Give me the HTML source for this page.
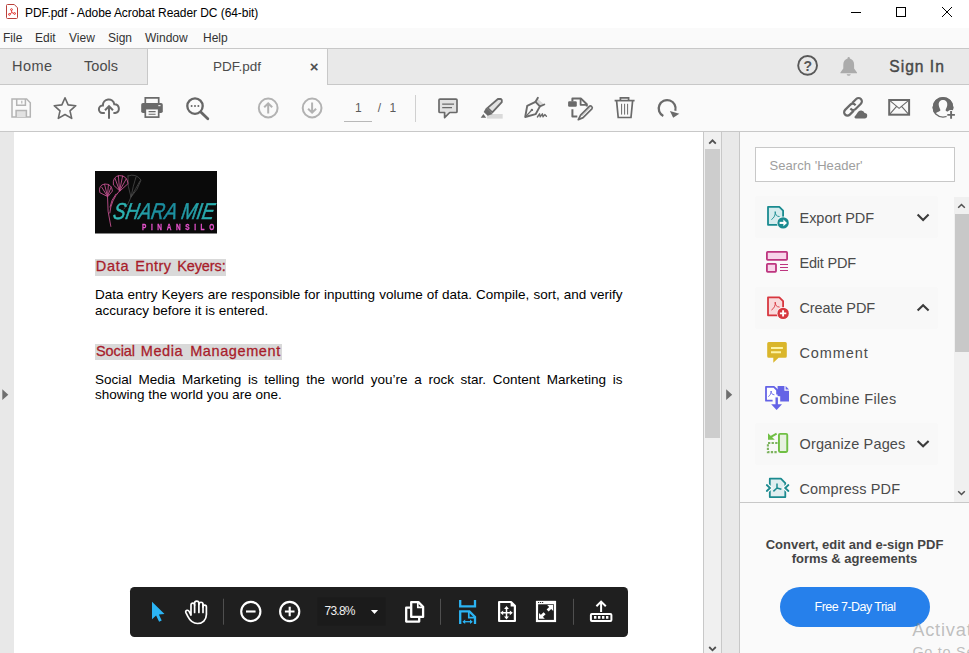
<!DOCTYPE html>
<html><head><meta charset="utf-8"><title>PDF.pdf - Adobe Acrobat Reader DC (64-bit)</title>
<style>
*{margin:0;padding:0;box-sizing:border-box}
html,body{width:969px;height:653px;overflow:hidden;background:#fff;font-family:"Liberation Sans",sans-serif;color:#333}
.a{position:absolute}
.t{position:absolute;white-space:nowrap;line-height:1}
svg{position:absolute;overflow:visible}
.p{left:95px;width:527.5px;font-size:13.5px;line-height:16px;color:#000;white-space:nowrap}
.j{text-align:justify;text-align-last:justify;white-space:normal}
.h{font-size:14.5px;color:#a81c2a;-webkit-text-stroke:0.28px #a81c2a}
.r{left:799.5px;font-size:14.5px;color:#4b4b4b;margin-top:0.5px}
</style></head><body>
<!-- title bar -->
<div class="a" id="titlebar" style="left:0;top:0;width:969px;height:28px;background:#fff"></div>
<div class="t" id="title" style="left:25px;top:7.2px;font-size:12px;color:#000;letter-spacing:-0.07px">PDF.pdf - Adobe Acrobat Reader DC (64-bit)</div>
<!-- menu bar -->
<div class="a" id="menubar" style="left:0;top:28px;width:969px;height:20px;background:#fafafa"></div>
<div class="t m" style="left:3px;top:32px;font-size:12px">File</div>
<div class="t m" style="left:35px;top:32px;font-size:12px">Edit</div>
<div class="t m" style="left:69px;top:32px;font-size:12px">View</div>
<div class="t m" style="left:108px;top:32px;font-size:12px">Sign</div>
<div class="t m" style="left:145px;top:32px;font-size:12px">Window</div>
<div class="t m" style="left:203px;top:32px;font-size:12px">Help</div>
<!-- tab bar -->
<div class="a" id="tabbar" style="left:0;top:48px;width:969px;height:37px;background:#e9e9e9;border-top:1px solid #c8c8c8;border-bottom:1px solid #c8c8c8"></div>
<div class="a" id="tab" style="left:147px;top:49px;width:181px;height:36px;background:#fafafa;border-left:1px solid #c8c8c8;border-right:1px solid #c8c8c8"></div>
<div class="t" style="left:12px;top:59.3px;font-size:14.5px;color:#4b4b4b;letter-spacing:0.5px">Home</div>
<div class="t" style="left:84px;top:59.3px;font-size:14.5px;color:#4b4b4b;letter-spacing:0.05px">Tools</div>
<div class="t" style="left:213px;top:60.2px;font-size:13.5px;color:#4b4b4b">PDF.pdf</div>
<div class="t" style="left:309.8px;top:58.5px;font-size:15px;color:#505050;font-weight:bold">×</div>
<div class="t" style="left:889.3px;top:58.6px;font-size:15.6px;color:#484848;letter-spacing:1px;-webkit-text-stroke:0.4px #484848">Sign In</div>
<!-- toolbar -->
<div class="a" id="toolbar" style="left:0;top:85px;width:969px;height:47px;background:#fafafa;border-bottom:1px solid #c8c8c8"></div>
<div class="t" style="left:355px;top:101.9px;font-size:12px;color:#5a5a5a">1</div>
<div class="t" style="left:377.8px;top:101.9px;font-size:12px;color:#5a5a5a;word-spacing:5px">/ 1</div>
<div class="a" style="left:344px;top:120.7px;width:28px;height:1px;background:#b8b8b8"></div>
<div class="a" style="left:415px;top:95px;width:1px;height:27px;background:#d0d0d0"></div>
<!-- doc area -->
<div class="a" id="gutterL" style="left:0;top:132px;width:14px;height:521px;background:#e8e8e8"></div>
<div class="a" id="page" style="left:14px;top:132px;width:689px;height:521px;background:#fff"></div>
<div class="a" id="sb" style="left:703px;top:132px;width:19px;height:521px;background:#f0f0f0;border-left:1px solid #c8c8c8;border-right:1px solid #c8c8c8"></div>
<div class="a" id="thumb" style="left:705px;top:149px;width:15px;height:289px;background:#cdcdcd"></div>
<div class="a" id="gutterR" style="left:722px;top:132px;width:17px;height:521px;background:#e9e9e9"></div>
<div class="a" id="panel" style="left:739px;top:132px;width:230px;height:521px;background:#fafafa;border-left:1px solid #c8c8c8"></div>


<!-- logo -->
<svg id="logo" width="122" height="62.5" viewBox="95 171 122 62.5" style="left:95px;top:171px;overflow:hidden">
<defs><linearGradient id="tg" x1="0" y1="0" x2="1" y2="0"><stop offset="0" stop-color="#30bcb6"/><stop offset="0.5" stop-color="#19889c"/><stop offset="1" stop-color="#2cb2b0"/></linearGradient><filter id="soft"><feGaussianBlur stdDeviation="0.45"/></filter></defs>
<rect x="95" y="171" width="122" height="62.5" fill="#0a0a0a"/>
<g filter="url(#soft)" fill="none" stroke-linecap="round">
<g stroke="#4a4a4a" stroke-width="0.8"><path d="M128,176 Q136,173 141,180 Q138,190 131,197 Q127,186 128,176 Z M131,197 Q133,186 136,177 M131,197 Q136,188 140,181 M131,197 Q129,204 124,209"/></g>
<g stroke="#c2508d" stroke-width="0.9"><path d="M107.5,196.5 L99.8,192.6 Q98.2,185 104.8,184 Q111.6,183.8 112.4,190.6 Z"/><path d="M107.5,196.5 L101.6,187 M107.5,196.5 L104.6,184.4 M107.5,196.5 L108.4,184.6 M107.5,196.5 L111.2,187"/><path d="M119.6,190.8 L113.4,185 Q112.4,176.4 119.4,175.6 Q127,175.4 128,183.2 Z"/><path d="M119.6,190.8 L115,178.4 M119.6,190.8 L118.4,175.8 M119.6,190.8 L122.6,176 M119.6,190.8 L126.2,179"/><path d="M107.5,196.5 Q107,211 110.8,226.4 M119.6,190.8 Q111,200 109.8,213 M110,207 Q111,200 116,194"/></g>
</g>
<g filter="url(#soft)"><text x="112.5" y="219.2" font-family="'Liberation Sans',sans-serif" font-style="italic" font-size="23" fill="url(#tg)" stroke="url(#tg)" stroke-width="0.5" textLength="101" lengthAdjust="spacingAndGlyphs" transform="skewX(-10) translate(38.5,0)">SHARA MIE</text>
<text x="182.05" y="230.1" font-family="'Liberation Sans',sans-serif" font-weight="bold" font-size="8.3" fill="#e652cc" stroke="#e652cc" stroke-width="0.3" textLength="92.6" lengthAdjust="spacing" transform="scale(0.78,1)">PINANSILO</text></g>
</svg>
<!-- document content -->
<div class="a" id="hl1" style="left:95px;top:259px;width:131px;height:16.5px;background:#d9d9d9"></div>
<div class="t h" id="h1" style="left:0;top:258.7px"><span class="a" style="left:95.8px;letter-spacing:0.7px">Data</span><span class="a" style="left:135.3px;letter-spacing:0.45px">Entry</span><span class="a" style="left:177.2px;letter-spacing:-0.1px">Keyers:</span></div>
<div class="a p j" style="top:287.2px">Data entry Keyers are responsible for inputting volume of data. Compile, sort, and verify</div>
<div class="a p" style="top:303px">accuracy before it is entered.</div>
<div class="a" id="hl2" style="left:95px;top:344px;width:187px;height:16px;background:#d9d9d9"></div>
<div class="t h" id="h2" style="left:0;top:343.7px"><span class="a" style="left:96px;letter-spacing:-0.1px">Social</span><span class="a" style="left:140.8px;letter-spacing:0.55px">Media</span><span class="a" style="left:190.2px;letter-spacing:0.6px">Management</span></div>
<div class="a p j" style="top:371.8px">Social Media Marketing is telling the world you’re a rock star. Content Marketing is</div>
<div class="a p" style="top:386.8px">showing the world you are one.</div>
<!-- right panel -->
<div class="a" style="left:755px;top:147px;width:200px;height:35px;background:#fff;border:1px solid #c8c8c8"></div>
<div class="t" style="left:769.5px;top:159.2px;font-size:13px;color:#9e9e9e;letter-spacing:0.05px">Search 'Header'</div>
<div class="a" style="left:755px;top:196px;width:183px;height:42px;border-radius:3px;background:#f8f8f8"></div><div class="a" style="left:755px;top:286.5px;width:183px;height:42px;border-radius:3px;background:#f8f8f8"></div><div class="a" style="left:755px;top:422.5px;width:183px;height:42px;border-radius:3px;background:#f8f8f8"></div>
<div class="t r" style="top:210px;letter-spacing:-0.03px">Export PDF</div>
<div class="t r" style="top:255.3px;letter-spacing:-0.2px">Edit PDF</div>
<div class="t r" style="top:300.5px;letter-spacing:-0.1px">Create PDF</div>
<div class="t r" style="top:345.8px;letter-spacing:0.9px">Comment</div>
<div class="t r" style="top:391px;letter-spacing:0.33px">Combine Files</div>
<div class="t r" style="top:436.3px;letter-spacing:0.14px">Organize Pages</div>
<div class="t r" style="top:481.5px;letter-spacing:0.13px">Compress PDF</div>
<div class="a" style="left:954px;top:197px;width:15px;height:305px;background:#f0f0f0"></div>
<div class="a" style="left:955px;top:214px;width:14px;height:138px;background:#c8c8c8"></div>
<div class="a" style="left:740px;top:502px;width:229px;height:1px;background:#c8c8c8"></div>
<div class="t" style="left:740px;width:229px;text-align:center;top:537.6px;font-size:13px;font-weight:bold;color:#444;line-height:14.5px;white-space:normal;padding:0 20px">Convert, edit and e-sign PDF<br>forms &amp; agreements</div>
<div class="a" style="left:780px;top:587px;width:150px;height:40px;border-radius:20px;background:#2680eb"></div>
<div class="t" style="left:780px;width:150px;text-align:center;top:601px;font-size:12.5px;color:#fff;letter-spacing:-0.55px">Free 7-Day Trial</div>
<div class="t" style="left:912.2px;top:620.8px;font-size:18.3px;color:rgba(140,140,140,0.55);letter-spacing:0.8px">Activate</div>
<div class="t" style="left:912.4px;top:644.6px;font-size:14.5px;color:rgba(140,140,140,0.55);letter-spacing:0.7px">Go to Settings</div>

<!-- ICONS -->
<svg id="ic" width="969" height="653" viewBox="0 0 969 653" style="left:0;top:0" fill="none" stroke-linecap="butt" stroke-linejoin="miter">
<!-- title icon -->
<g id="i-title"><path d="M7.5,4.5 H14.3 L17.5,7.8 V17.5 Q17.5,18.5 16.5,18.5 H7.5 Q6.5,18.5 6.5,17.5 V5.5 Q6.5,4.5 7.5,4.5 Z" stroke="#b9403a" stroke-width="1" fill="#fff"/>
<g stroke="#e0241f" stroke-width="0.9"><circle cx="11.5" cy="9.6" r="0.9"/><circle cx="9.4" cy="14.4" r="0.9"/><circle cx="14.6" cy="13.5" r="0.9"/><path d="M11.5,10.5 L11.8,12.6 L10.1,13.9 M11.8,12.6 L13.8,13.3"/></g></g>
<!-- window controls -->
<g id="i-win" stroke="#000" stroke-width="1"><path d="M851,12.5 H861"/><rect x="896.5" y="7.5" width="9" height="9"/><path d="M942,7 L952,17 M952,7 L942,17"/></g>
<!-- tab bar icons -->
<g id="i-help"><circle cx="807.6" cy="65.4" r="9.4" stroke="#585858" stroke-width="1.9"/></g>
<g id="i-bell" fill="#ababab"><path d="M848.7,57 q1.2,0 1.2,1.4 q4.2,1.3 4.2,6.4 v3.6 l2.9,4 v0.9 h-16.6 v-0.9 l2.9,-4 v-3.6 q0,-5.1 4.2,-6.4 q0,-1.4 1.2,-1.4 z"/><path d="M846.6,74.3 h4.2 q-0.4,1.5 -2.1,1.5 q-1.7,0 -2.1,-1.5 z"/></g>
<!-- toolbar icons -->
<g id="i-save" stroke="#b4b4b4" stroke-width="1.5"><path d="M12,99 H26.6 L30.3,102.8 V117 H12 Z"/><path d="M16.7,99 V105.3 H25.4 V99"/><path d="M21.8,100.7 V103.6" stroke-width="1.2"/><path d="M16.1,117 V110.4 H26.4 V117" fill="#e2e2e2"/></g>
<g id="i-star"><path d="M65.0,97.8 L68.1,104.9 L75.8,105.7 L70.0,110.8 L71.7,118.4 L65.0,114.5 L58.3,118.4 L60.0,110.8 L54.2,105.7 L61.9,104.9 Z" stroke="#6a6a6a" stroke-width="1.6" stroke-linejoin="round"/></g>
<g id="i-cloud" stroke="#6a6a6a" stroke-width="2"><path d="M104.8,113 H102.5 A3.8,3.8 0 0 1 102.9,105.4 A5.75,5.75 0 0 1 114.3,104.2 A4.5,4.5 0 0 1 115.3,113.1 H113.4"/><path d="M109,118.8 V106.4 M105,110.2 L109,106.2 L113,110.2"/></g>
<g id="i-print"><rect x="141.2" y="103" width="21.6" height="10" rx="1.8" fill="#6a6a6a"/><path d="M145.3,103 V97.9 H158.7 V103" stroke="#6a6a6a" stroke-width="1.7" fill="#fafafa"/><rect x="145.3" y="108.6" width="13.4" height="8.5" stroke="#6a6a6a" stroke-width="1.7" fill="#fafafa"/><path d="M148.6,111.6 H155.6 M148.6,114.2 H155.6" stroke="#6a6a6a" stroke-width="1.1"/><rect x="158.3" y="105" width="2.2" height="1.2" fill="#e8e8e8"/></g>
<g id="i-find" stroke="#666"><circle cx="195" cy="106.1" r="7.7" stroke-width="2.3"/><path d="M200.8,112 L207.8,118.8" stroke-width="2.8" stroke-linecap="round"/><g fill="#666" stroke="none"><circle cx="191.6" cy="106" r="1"/><circle cx="195" cy="106" r="1"/><circle cx="198.4" cy="106" r="1"/></g></g>
<g id="i-up" stroke="#b2b2b2" stroke-width="2"><circle cx="268.2" cy="108" r="9.4"/><path d="M268.2,113.6 V103.4 M264.2,107.3 L268.2,103.3 L272.2,107.3"/></g>
<g id="i-down" stroke="#b2b2b2" stroke-width="2"><circle cx="312.1" cy="108" r="9.4"/><path d="M312.1,102.4 V112.6 M308.1,108.7 L312.1,112.7 L316.1,108.7"/></g>
<g id="i-comment"><path d="M440,99.1 H456 Q457,99.1 457,100.1 V111.5 Q457,112.5 456,112.5 H449.7 L444.6,117.6 V112.5 H440 Q439,112.5 439,111.5 V100.1 Q439,99.1 440,99.1 Z" fill="#e2e2e2" stroke="#6a6a6a" stroke-width="1.7" stroke-linejoin="round"/><path d="M442.2,104.1 H454 M442.2,107.6 H452" stroke="#6a6a6a" stroke-width="1.2"/></g>
<g id="i-hl"><rect x="487" y="114" width="15.7" height="4.6" fill="#dadada"/><path d="M487.6,107.9 L497.9,99 H501 L501.8,100.1 V102.2 L492.3,112.3 Z" stroke="#6a6a6a" stroke-width="1.8" fill="#e2e2e2" stroke-linejoin="round"/><path d="M486.2,107.6 L492.7,113.9 L487.7,115.8 L483.7,112 Z" fill="#6a6a6a"/><path d="M480.7,117.7 L483.4,113.9 L486.2,117.7 Z" fill="#6a6a6a"/></g>
<g id="i-sign" stroke="#6a6a6a" stroke-width="1.9" stroke-linejoin="round" stroke-linecap="round"><path d="M537.6,98.8 L544.2,104.4 L540,106.2 L535.6,101.8 Z" fill="#d9d9d9" stroke="none"/><path d="M535.5,101.8 L537.9,97.7 M539.9,106.4 L544.3,104.5 M535.5,101.8 L539.9,106.4"/><path d="M535.5,101.8 L527.2,105.8 L525.2,117 L535.6,114.2 L539.9,106.4"/><path d="M525.6,116.6 L531.6,110.2" stroke-width="1.3"/><circle cx="531.9" cy="109.9" r="1.2" fill="#6a6a6a" stroke="none"/><path d="M537.4,117 L539.6,113.8 L540.2,116.8 L542.4,113.8 L543,116.8 L544.8,114.6 L546.4,116.2" stroke-width="1.4"/></g>
<g id="i-edit" stroke="#6a6a6a" stroke-width="2" stroke-linejoin="round"><path d="M572.4,101.4 V98.4 H580.8 L586.8,104.2 V106.6"/><path d="M580.6,98.6 V104.8 H586.6" stroke-width="1.8"/><path d="M572.4,109.2 V116.4 H577.3"/><rect x="568.1" y="101.3" width="8.7" height="5.5" rx="1.2" fill="#6a6a6a" stroke="none"/><path d="M580.6,115.1 L589.4,106.3 Q590.6,105.4 591.7,106.5 Q592.8,107.6 591.9,108.8 L583.1,117.6 L578.3,119.7 Z" stroke-width="1.7" fill="#fafafa"/><path d="M578.2,119.9 L579.4,117 L581,118.6 Z" fill="#6a6a6a" stroke="none"/><path d="M581.6,116 L590.2,107.4" stroke-width="0.7" stroke="#9a9a9a"/></g>
<g id="i-trash" stroke="#6a6a6a" stroke-width="1.7"><path d="M614.6,100.6 H634.6"/><path d="M620.4,100.4 V97.9 H628.6 V100.4"/><path d="M616.6,100.8 L618.2,117.5 H631 L632.6,100.8"/><path d="M621.6,103.8 V114.6 M624.6,103.8 V114.6 M627.6,103.8 V114.6" stroke-width="1"/></g>
<g id="i-rot"><path d="M663.3,116.05 A8.45,8.45 0 1 1 675.3,110.7" stroke="#6a6a6a" stroke-width="2.3"/><path d="M669.9,111 L679.3,113.8 L673.2,117.7 Z" fill="#6a6a6a"/></g>
<g id="i-link" stroke="#6a6a6a" stroke-width="2"><path d="M852.2,103 L856.2,99 A3.3,3.3 0 0 1 860.9,103.7 L855.6,109 C854.4,110.2 852.4,110.6 850.4,108.4" stroke-width="2.2"/><path d="M853.8,110.6 L849.8,114.6 A3.3,3.3 0 0 1 845.1,109.9 L850.4,104.6 C851.6,103.4 853.6,103 855.6,105.2" stroke-width="2.2"/><path d="M855.6,118.4 H864.4 A2.7,2.7 0 0 0 864.6,113 A3.9,3.9 0 0 0 857.6,112.4 Q856.4,114.4 854.6,116.6 Q854,118.4 855.6,118.4 Z" fill="#6a6a6a" stroke="#fafafa" stroke-width="1.4" paint-order="stroke"/></g>
<g id="i-mail" stroke="#6a6a6a"><rect x="889.2" y="100" width="19.9" height="14.7" stroke-width="2"/><path d="M889.6,100.4 L899.1,108.4 L908.7,100.4 M889.6,114.4 L896.6,106.4 M908.7,114.4 L901.6,106.4" stroke-width="1.1"/></g>
<g id="i-user"><circle cx="943" cy="107.4" r="10.4" fill="#6a6a6a"/><path d="M943,100 C946.4,100 947.6,102.6 947.2,105.4 C946.8,108 945.8,108.6 945.6,110 C945.4,111.4 949,112 950.6,113.4 V119 H935.4 V113.4 C937,112 940.6,111.4 940.4,110 C940.2,108.6 939.2,108 938.8,105.4 C938.4,102.6 939.6,100 943,100 Z" fill="#fafafa"/><circle cx="943" cy="107.4" r="9.8" stroke="#6a6a6a" stroke-width="1.3"/><circle cx="951.2" cy="114.9" r="4.9" fill="#fafafa"/><path d="M951.1,111.1 V118.7 M947.3,114.9 H954.9" stroke="#6a6a6a" stroke-width="1.9"/></g>

<!-- right panel icons -->
<g id="p-export"><path d="M768,206.9 H779.3 L783.1,210.7 V224.8 H768 Z" fill="#d5ecee" stroke="#1a8b90" stroke-width="1.8" stroke-linejoin="round"/><path d="M771.4,219.6 C774,218 775.6,215 775.2,211.6 C775.4,214.6 776.2,216.4 779.6,216.6" stroke="#1a8b90" stroke-width="0.9"/><circle cx="783.1" cy="222.9" r="6.4" fill="#fafafa"/><circle cx="783.1" cy="222.9" r="5.7" fill="#1a8b90"/><path d="M779.6,222.9 H784" stroke="#fff" stroke-width="2.1"/><path d="M783.4,219.6 L787,222.9 L783.4,226.2 Z" fill="#fff"/></g>
<g id="p-edit" stroke="#bd357f" stroke-width="1.8" fill="#f8d4e9"><rect x="766.9" y="251.9" width="20.2" height="8" rx="0.8"/><rect x="766.9" y="263.9" width="9.1" height="7.9" rx="0.8"/><path d="M780,264.5 H788 M780,267.5 H788 M780,270.5 H788" stroke-width="1" fill="none"/></g>
<g id="p-create"><path d="M768,297.4 H779.3 L783.1,301.2 V315.3 H768 Z" fill="#f9dadc" stroke="#d7373f" stroke-width="1.8" stroke-linejoin="round"/><path d="M771.4,310.1 C774,308.5 775.6,305.5 775.2,302.1 C775.4,305.1 776.2,306.9 779.6,307.1" stroke="#d7373f" stroke-width="0.9"/><circle cx="783.1" cy="313.4" r="6.4" fill="#fafafa"/><circle cx="783.1" cy="313.4" r="5.7" fill="#d7373f"/><path d="M779.9,313.4 H786.3 M783.1,310.2 V316.6" stroke="#fff" stroke-width="1.9"/></g>
<g id="p-comment"><path d="M768.7,342 H785.3 Q786.8,342 786.8,343.5 V356.3 Q786.8,357.8 785.3,357.8 H778.6 L773.3,362.8 V357.8 H768.7 Q767.2,357.8 767.2,356.3 V343.5 Q767.2,342 768.7,342 Z" fill="#dab62b"/><path d="M771,348 H782.9 M771,352.2 H781" stroke="#fdf3a4" stroke-width="1.9"/></g>
<g id="p-combine"><path d="M777.1,394.5 V390 L773.9,386.8 H766 V400.7 H772.6" stroke="#6463e6" stroke-width="1.8" fill="#fff" stroke-linejoin="round"/><path d="M768.3,396.6 C770,395.6 771.2,393.6 771.1,391 C771.3,393.4 772,394.6 774.4,394.8" stroke="#6463e6" stroke-width="0.9"/><path d="M777.6,386.1 H784.4 V390.8 H789 V401.6 H780.2 V396.2 H777.6 Z" fill="#6463e6"/><path d="M785.6,386.1 L789,389.6 H785.6 Z" fill="#6463e6"/><path d="M776.7,396.4 V404" stroke="#fafafa" stroke-width="4.6"/><path d="M776.7,397.4 V405" stroke="#6463e6" stroke-width="2.4"/><path d="M771.2,404.2 H782 L776.6,409.9 Z" fill="#6463e6"/></g>
<g id="p-organize"><rect x="778.95" y="433.85" width="8.3" height="18.2" rx="1.2" fill="#e7f1e0" stroke="#70bf44" stroke-width="1.9"/><path d="M777.5,443 H767.9 V452.1 H777.5" stroke="#7db35f" stroke-width="2.1" stroke-dasharray="2.3 1.3"/><path d="M768,433.2 V439.7 H774.8 Z" fill="#70bf44"/><path d="M771,436.8 L776.6,433.6" stroke="#70bf44" stroke-width="2"/></g>
<g id="p-compress"><path d="M769.8,478.7 H780.9 L785.3,483.1 V497.1 H769.8 Z" fill="#e0eef0" stroke="#1b8a8f" stroke-width="1.8" stroke-linejoin="round"/><path d="M766.8,485 L770,488 L766.8,491 M788.4,485 L785.2,488 L788.4,491" stroke="#fafafa" stroke-width="4.4"/><path d="M766.8,485 L770,488 L766.8,491 M788.4,485 L785.2,488 L788.4,491" stroke="#1b8a8f" stroke-width="1.8" stroke-linecap="round"/><path d="M777,483.6 V488 L773.4,491.4 M777,488 L781.4,489.2" stroke="#1b8a8f" stroke-width="1.5"/></g>
<g id="p-chev" stroke="#3c3c3c" stroke-width="2.1"><path d="M917.6,214.6 L923.1,220 L928.6,214.6"/><path d="M917.6,310.6 L923.1,305.2 L928.6,310.6"/><path d="M917.6,440.9 L923.1,446.3 L928.6,440.9"/></g>
<g id="sb-arrows" stroke="#505050" stroke-width="1.8"><path d="M709.2,143.6 L712.5,140.3 L715.8,143.6"/><path d="M709.2,647 L712.5,650.3 L715.8,647"/><path d="M958.2,207.8 L961.5,204.5 L964.8,207.8" stroke-width="1.5"/><path d="M958.2,491.2 L961.5,494.5 L964.8,491.2" stroke-width="1.5"/></g>
<path d="M2.3,389.3 V400.1 L8.3,394.7 Z" fill="#6e6e6e"/><path d="M726.2,389.3 V400.1 L732.2,394.7 Z" fill="#6e6e6e"/>

<!-- floating toolbar -->
<g id="ft"><rect x="130" y="587" width="498" height="50" rx="4.5" fill="#1f1f1f"/><rect x="317.4" y="597.5" width="68" height="28" fill="#1b1b1b"/>
<path d="M223.5,598.7 V624.7 M440.5,598.8 V624.8 M573.5,598.8 V624.8" stroke="#4f4f4f" stroke-width="1"/>
<path d="M152,601.7 V619.2 L156.1,615.5 L159.1,621.8 L161.7,620.5 L158.9,614.5 L164.5,614 Z" fill="#2bb4f4"/>
<g id="ft-hand" stroke="#fff" stroke-width="1.7" stroke-linejoin="round" stroke-linecap="round"><path d="M191,615 V604.9 A1.8,1.8 0 0 1 194.6,604.9 V603.3 A2.15,2.15 0 0 1 198.9,603.3 V604.3 A2.05,2.05 0 0 1 203,604.3 V606.9 A1.7,1.7 0 0 1 206.4,606.9 V614.5 C206.4,620 202.5,623.5 197.5,623.5 C192.5,623.5 189.8,620.4 187.8,616.4 L185.9,612.6 Q185.2,610.8 187,610.3 Q188.5,610 189.4,611.8 L191,615"/><path d="M194.6,604.9 V612.4 M198.9,603.3 V612.4 M203,604.3 V612.4"/></g>
<g stroke="#fff" stroke-width="2.1"><circle cx="250.8" cy="611.5" r="9.6"/><path d="M246,611.5 H255.6"/><circle cx="289.7" cy="611.5" r="9.6"/><path d="M284.9,611.5 H294.5 M289.7,606.7 V616.3"/></g>
<path d="M370.9,609.9 H378.1 L374.5,614 Z" fill="#fff"/>
<g id="ft-pages" stroke="#fff" stroke-width="2.3" stroke-linejoin="round"><path d="M411.2,602.1 H418.4 L423.1,606.8 V616.9 H411.2 Z"/><path d="M417.8,602.6 V607.4 H422.6" stroke-width="1.7"/><path d="M410.6,607.7 H406.2 V621.6 H419.2 V617.4"/></g>
<g id="ft-fitw" stroke="#2bb4f4" stroke-width="2.3"><path d="M460.2,600 V606.4 H475 V600"/><path d="M460.2,624 V611.4 H469.4 L475,617 V624"/><path d="M468.8,612 V617.6 H474.4" stroke-width="1.7"/><path d="M463.6,621.7 H471.6" stroke-width="1.3"/><path d="M465.2,619.5 L462.4,621.7 L465.2,623.9 Z M470,619.5 L472.8,621.7 L470,623.9 Z" fill="#2bb4f4" stroke="none"/></g>
<g id="ft-fitp"><path d="M499.1,602 H511 L514.9,605.9 V621 H499.1 Z" stroke="#fff" stroke-width="2.2" stroke-linejoin="round"/><path d="M510.6,602 V606.4 H515 Z" fill="#fff"/><path d="M506.5,608 V617.6 M502,612.8 H511" stroke="#fff" stroke-width="1.5"/><path d="M506.5,606 L508.9,609 H504.1 Z M506.5,619.4 L508.9,616.4 H504.1 Z M500.2,612.8 L503.2,610.4 V615.2 Z M512.8,612.8 L509.8,610.4 V615.2 Z" fill="#fff"/></g>
<g id="ft-full"><rect x="537" y="602" width="18" height="19" stroke="#fff" stroke-width="2.2"/><path d="M536.4,602.6 H555.6" stroke="#fff" stroke-width="3.4"/><path d="M538,602.5 H539.2 M540,602.5 H541.2 M542,602.5 H543.2" stroke="#1f1f1f" stroke-width="0.9"/><path d="M551,607.2 L547.6,610.6 M541.2,616.6 L544.6,613.2" stroke="#fff" stroke-width="2.8"/><path d="M547.2,605 H553.2 V611 Z" fill="#fff"/><path d="M544.8,618.8 H539 V613 Z" fill="#fff"/></g>
<g id="ft-up" stroke="#fff" stroke-width="2"><path d="M601.1,612 V602.2 M596.4,606.3 L601.1,601.6 L605.8,606.3"/><rect x="590.9" y="613.9" width="20.5" height="7" rx="1"/><path d="M594,617.4 H596.4 M598,617.4 H600.4 M602,617.4 H604.4 M606,617.4 H608.4" stroke-width="2.6"/></g>
</g>
</svg>
<div class="t" style="left:803.5px;top:59px;font-size:14px;font-weight:bold;color:#585858">?</div>
<div class="t" style="left:324.5px;top:604.6px;font-size:12px;color:#f0f0f0;letter-spacing:-0.75px">73.8%</div>
</body></html>
